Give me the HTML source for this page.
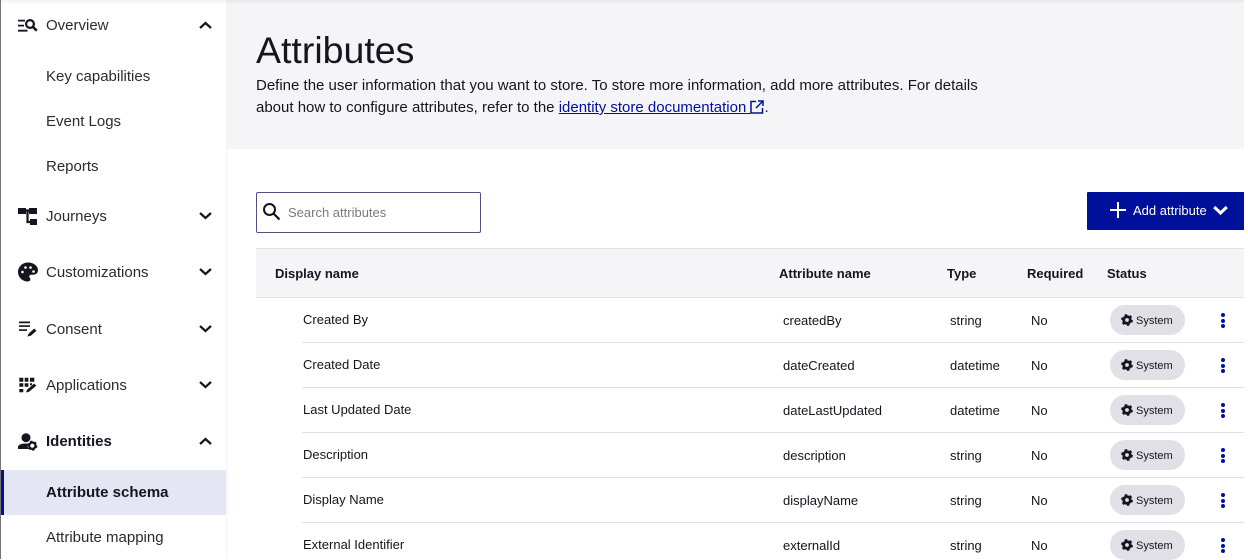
<!DOCTYPE html>
<html>
<head>
<meta charset="utf-8">
<style>
html,body{margin:0;padding:0;width:1248px;height:559px;overflow:hidden;background:#fff;font-family:"Liberation Sans",sans-serif;color:#15141f}
.a{position:absolute;white-space:nowrap}
#edge{position:absolute;left:0;top:0;width:1px;height:559px;background:#757575}
#side{position:absolute;left:1px;top:0;width:225px;height:559px;background:#fff}
#sep{position:absolute;left:226px;top:149px;width:2px;height:410px;background:#f8f8fa}
#hero{position:absolute;left:226px;top:0;width:1018px;height:149px;background:#f5f5f8}
#shadow{position:absolute;left:1px;top:0;width:1243px;height:4px;background:linear-gradient(rgba(0,0,0,.06),rgba(0,0,0,0))}
.n{position:absolute;left:46px;font-size:15px;line-height:18px;color:#2b2a33;white-space:nowrap}
.i{position:absolute;left:18px;width:20px;height:20px}
.c{position:absolute;left:198px;width:14px;height:9px}
.t{position:absolute;margin-top:1px;font-size:13px;line-height:14px;color:#15141f;white-space:nowrap}
.h{position:absolute;top:266px;font-size:13px;line-height:15px;font-weight:bold;color:#15141f;white-space:nowrap}
.l{position:absolute;left:302px;width:942px;height:1px;background:#e0e0e6}
.b{position:absolute;left:1110px;width:75px;height:30px;border-radius:15px;background:#e0e0e6}
.b span{position:absolute;left:26px;top:10px;font-size:11px;line-height:13px;color:#15141f}
.b svg{position:absolute;left:11px;top:9px}
.d{position:absolute;left:1221px;width:4px}
.d i{display:block;width:4px;height:4px;border-radius:2px;background:#00109a;margin-bottom:1.500px}
</style>
</head>
<body>
<div id="hero"></div>
<div id="side"></div>
<div id="sep"></div>
<div id="shadow"></div>
<div id="edge"></div>

<!-- nav -->
<svg class="i" style="top:15px" viewBox="0 0 20 20"><path d="M0 4.800h7v1.700H0zM0 9.800h6v1.700H0zM0 14.800h9.500v1.800H0z" fill="#15141f"/><circle cx="12" cy="9" r="3.900" fill="none" stroke="#15141f" stroke-width="2.200"/><path d="M14.800 11.800l4 4" stroke="#15141f" stroke-width="2.500"/></svg>
<div class="n" style="top:17px">Overview</div>
<svg class="c" style="top:21px" viewBox="0 0 14 9"><path d="M2 7l5.500-5 5.500 5" fill="none" stroke="#15141f" stroke-width="2.200"/></svg>
<div class="n" style="top:68px">Key capabilities</div>
<div class="n" style="top:113px">Event Logs</div>
<div class="n" style="top:158px">Reports</div>

<svg class="i" style="top:206px" viewBox="0 0 20 20"><path d="M0 2h8v6H0zM11 2h8v6h-8zM12 13h7v6h-7z" fill="#15141f"/><path d="M8 4.500h3M9.500 4.500V16H12" fill="none" stroke="#15141f" stroke-width="2.200"/></svg>
<div class="n" style="top:208px">Journeys</div>
<svg class="c" style="top:211px" viewBox="0 0 14 9"><path d="M2 2l5.500 5 5.500-5" fill="none" stroke="#15141f" stroke-width="2.200"/></svg>

<svg class="i" style="top:262px" viewBox="0 0 20 20"><path d="M10 .5C4.500.5 0 4.800 0 10s4.500 9.500 10 9.500c1.500 0 2.400-1 2.400-2.200 0-.6-.2-1-.6-1.500-.4-.4-.6-.8-.6-1.300 0-1 .8-1.800 1.900-1.800h2.200c2.700 0 4.700-2 4.700-4.500C20 3.800 15.500.5 10 .5z" fill="#15141f"/><g fill="#fff"><circle cx="4.500" cy="10" r="1.300"/><circle cx="7.500" cy="5.500" r="1.300"/><circle cx="12.500" cy="5.500" r="1.300"/><circle cx="15.500" cy="9.500" r="1.300"/></g></svg>
<div class="n" style="top:264px">Customizations</div>
<svg class="c" style="top:267px" viewBox="0 0 14 9"><path d="M2 2l5.500 5 5.500-5" fill="none" stroke="#15141f" stroke-width="2.200"/></svg>

<svg class="i" style="top:319px" viewBox="0 0 20 20"><path d="M1 2.500h11v1.700H1zM1 6.200h11v1.700H1zM1 10.200h8v1.700H1z" fill="#15141f"/><path d="M9.500 17.500l1-2.600 5.700-5.400 2.300 2.300-5.700 5z" fill="#15141f"/></svg>
<div class="n" style="top:321px">Consent</div>
<svg class="c" style="top:324px" viewBox="0 0 14 9"><path d="M2 2l5.500 5 5.500-5" fill="none" stroke="#15141f" stroke-width="2.200"/></svg>

<svg class="i" style="top:375px" viewBox="0 0 20 20"><path d="M1.300 2.700h4v4h-4zM6.700 2.700h3.700v4H6.700zM12 2.700h4.300v4H12zM1.300 8.300h4v3.400h-4zM6.700 8.300h3.700v3.400H6.700zM12 8.300h2v2h-2zM1.300 14h4v3.300h-4z" fill="#15141f"/><path d="M8 17.500l1-2.600 7-6.400 2.300 2.300-7.300 6z" fill="#15141f"/></svg>
<div class="n" style="top:377px">Applications</div>
<svg class="c" style="top:380px" viewBox="0 0 14 9"><path d="M2 2l5.500 5 5.500-5" fill="none" stroke="#15141f" stroke-width="2.200"/></svg>

<svg class="i" style="top:431px" viewBox="0 0 20 20"><circle cx="8" cy="6.700" r="4.500" fill="#15141f"/><path d="M0 18v-2c0-2 3-3.500 7.500-3.500 1 0 1.800.1 2.500.3-.6 1.700-.4 3.700.7 5.200z" fill="#15141f"/><circle cx="14.300" cy="14.700" r="3.200" fill="none" stroke="#15141f" stroke-width="2.200"/><circle cx="14.300" cy="14.700" r="4.400" fill="none" stroke="#15141f" stroke-width="1.300" stroke-dasharray="2.300 2.300"/></svg>
<div class="n" style="top:433px;font-weight:bold;color:#15141f">Identities</div>
<svg class="c" style="top:437px" viewBox="0 0 14 9"><path d="M2 7l5.500-5 5.500 5" fill="none" stroke="#15141f" stroke-width="2.200"/></svg>

<div class="a" style="left:1px;top:470px;width:225px;height:45px;background:#e4e6f3"></div>
<div class="a" style="left:1px;top:470px;width:3px;height:45px;background:#00109a"></div>
<div class="n" style="top:484px;font-weight:bold;color:#15141f">Attribute schema</div>
<div class="n" style="top:529px">Attribute mapping</div>

<!-- hero -->
<div class="a" style="left:256px;top:29px;font-size:37.500px;line-height:42px;color:#15141f">Attributes</div>
<div class="a" style="left:256px;top:75px;font-size:15px;line-height:22px;color:#15141f">Define the user information that you want to store. To store more information, add more attributes. For details<br>about how to configure attributes, refer to the <span style="color:#00109a;text-decoration:underline">identity store documentation <svg width="14" height="14" viewBox="0 0 14 14" style="vertical-align:-2px"><path d="M6 1.500H1v11.500h11.500V8M8 1h5v5M13 1L6 8" fill="none" stroke="#00109a" stroke-width="1.500"/></svg></span>.</div>

<!-- toolbar -->
<div class="a" style="left:256px;top:192px;width:223px;height:39px;border:1px solid #4f5180;border-radius:2px"></div>
<svg class="a" style="left:262px;top:202px" width="20" height="20" viewBox="0 0 20 20"><circle cx="7.500" cy="7.500" r="5.500" fill="none" stroke="#15141f" stroke-width="2"/><path d="M11.500 11.500l6 6" stroke="#15141f" stroke-width="2.200"/></svg>
<div class="a" style="left:288px;top:205px;font-size:13px;line-height:15px;color:#7a7a80">Search attributes</div>

<div class="a" style="left:1087px;top:192px;width:157px;height:38px;background:#00109a;border-radius:1px 0 0 1px"></div>
<svg class="a" style="left:1109px;top:202px" width="18" height="16" viewBox="0 0 18 16"><path d="M9 0v16M1 8h16" stroke="#fff" stroke-width="2"/></svg>
<div class="a" style="left:1133px;top:203px;font-size:13px;line-height:15px;color:#fff">Add attribute</div>
<svg class="a" style="left:1212px;top:204px" width="17" height="12" viewBox="0 0 17 12"><path d="M2.200 3l6.300 6 6.300-6" fill="none" stroke="#fff" stroke-width="3"/></svg>

<!-- table head -->
<div class="a" style="left:256px;top:248px;width:988px;height:48px;background:#f5f5f8;border-top:1px solid #e0e0e6;border-bottom:1px solid #e0e0e6;box-sizing:content-box"></div>
<div class="h" style="left:275px">Display name</div>
<div class="h" style="left:779px">Attribute name</div>
<div class="h" style="left:947px">Type</div>
<div class="h" style="left:1027px">Required</div>
<div class="h" style="left:1107px">Status</div>

<!-- rows -->
<div class="t" style="left:303px;top:312px">Created By</div>
<div class="t" style="left:783px;top:313px">createdBy</div>
<div class="t" style="left:950px;top:313px">string</div>
<div class="t" style="left:1031px;top:313px">No</div>
<div class="b" style="top:305px"><svg width="12" height="12" viewBox="0 0 12 12"><circle cx="6" cy="6" r="3.300" fill="none" stroke="#15141f" stroke-width="2.800"/><circle cx="6" cy="6" r="5" fill="none" stroke="#15141f" stroke-width="1.800" stroke-dasharray="2.600 2.640"/></svg><span>System</span></div>
<div class="d" style="top:313px"><i></i><i></i><i></i></div>
<div class="l" style="top:342px"></div>

<div class="t" style="left:303px;top:357px">Created Date</div>
<div class="t" style="left:783px;top:358px">dateCreated</div>
<div class="t" style="left:950px;top:358px">datetime</div>
<div class="t" style="left:1031px;top:358px">No</div>
<div class="b" style="top:350px"><svg width="12" height="12" viewBox="0 0 12 12"><circle cx="6" cy="6" r="3.300" fill="none" stroke="#15141f" stroke-width="2.800"/><circle cx="6" cy="6" r="5" fill="none" stroke="#15141f" stroke-width="1.800" stroke-dasharray="2.600 2.640"/></svg><span>System</span></div>
<div class="d" style="top:358px"><i></i><i></i><i></i></div>
<div class="l" style="top:387px"></div>

<div class="t" style="left:303px;top:402px">Last Updated Date</div>
<div class="t" style="left:783px;top:403px">dateLastUpdated</div>
<div class="t" style="left:950px;top:403px">datetime</div>
<div class="t" style="left:1031px;top:403px">No</div>
<div class="b" style="top:395px"><svg width="12" height="12" viewBox="0 0 12 12"><circle cx="6" cy="6" r="3.300" fill="none" stroke="#15141f" stroke-width="2.800"/><circle cx="6" cy="6" r="5" fill="none" stroke="#15141f" stroke-width="1.800" stroke-dasharray="2.600 2.640"/></svg><span>System</span></div>
<div class="d" style="top:403px"><i></i><i></i><i></i></div>
<div class="l" style="top:432px"></div>

<div class="t" style="left:303px;top:447px">Description</div>
<div class="t" style="left:783px;top:448px">description</div>
<div class="t" style="left:950px;top:448px">string</div>
<div class="t" style="left:1031px;top:448px">No</div>
<div class="b" style="top:440px"><svg width="12" height="12" viewBox="0 0 12 12"><circle cx="6" cy="6" r="3.300" fill="none" stroke="#15141f" stroke-width="2.800"/><circle cx="6" cy="6" r="5" fill="none" stroke="#15141f" stroke-width="1.800" stroke-dasharray="2.600 2.640"/></svg><span>System</span></div>
<div class="d" style="top:448px"><i></i><i></i><i></i></div>
<div class="l" style="top:477px"></div>

<div class="t" style="left:303px;top:492px">Display Name</div>
<div class="t" style="left:783px;top:493px">displayName</div>
<div class="t" style="left:950px;top:493px">string</div>
<div class="t" style="left:1031px;top:493px">No</div>
<div class="b" style="top:485px"><svg width="12" height="12" viewBox="0 0 12 12"><circle cx="6" cy="6" r="3.300" fill="none" stroke="#15141f" stroke-width="2.800"/><circle cx="6" cy="6" r="5" fill="none" stroke="#15141f" stroke-width="1.800" stroke-dasharray="2.600 2.640"/></svg><span>System</span></div>
<div class="d" style="top:493px"><i></i><i></i><i></i></div>
<div class="l" style="top:522px"></div>

<div class="t" style="left:303px;top:537px">External Identifier</div>
<div class="t" style="left:783px;top:538px">externalId</div>
<div class="t" style="left:950px;top:538px">string</div>
<div class="t" style="left:1031px;top:538px">No</div>
<div class="b" style="top:530px"><svg width="12" height="12" viewBox="0 0 12 12"><circle cx="6" cy="6" r="3.300" fill="none" stroke="#15141f" stroke-width="2.800"/><circle cx="6" cy="6" r="5" fill="none" stroke="#15141f" stroke-width="1.800" stroke-dasharray="2.600 2.640"/></svg><span>System</span></div>
<div class="d" style="top:538px"><i></i><i></i><i></i></div>
</body>
</html>
